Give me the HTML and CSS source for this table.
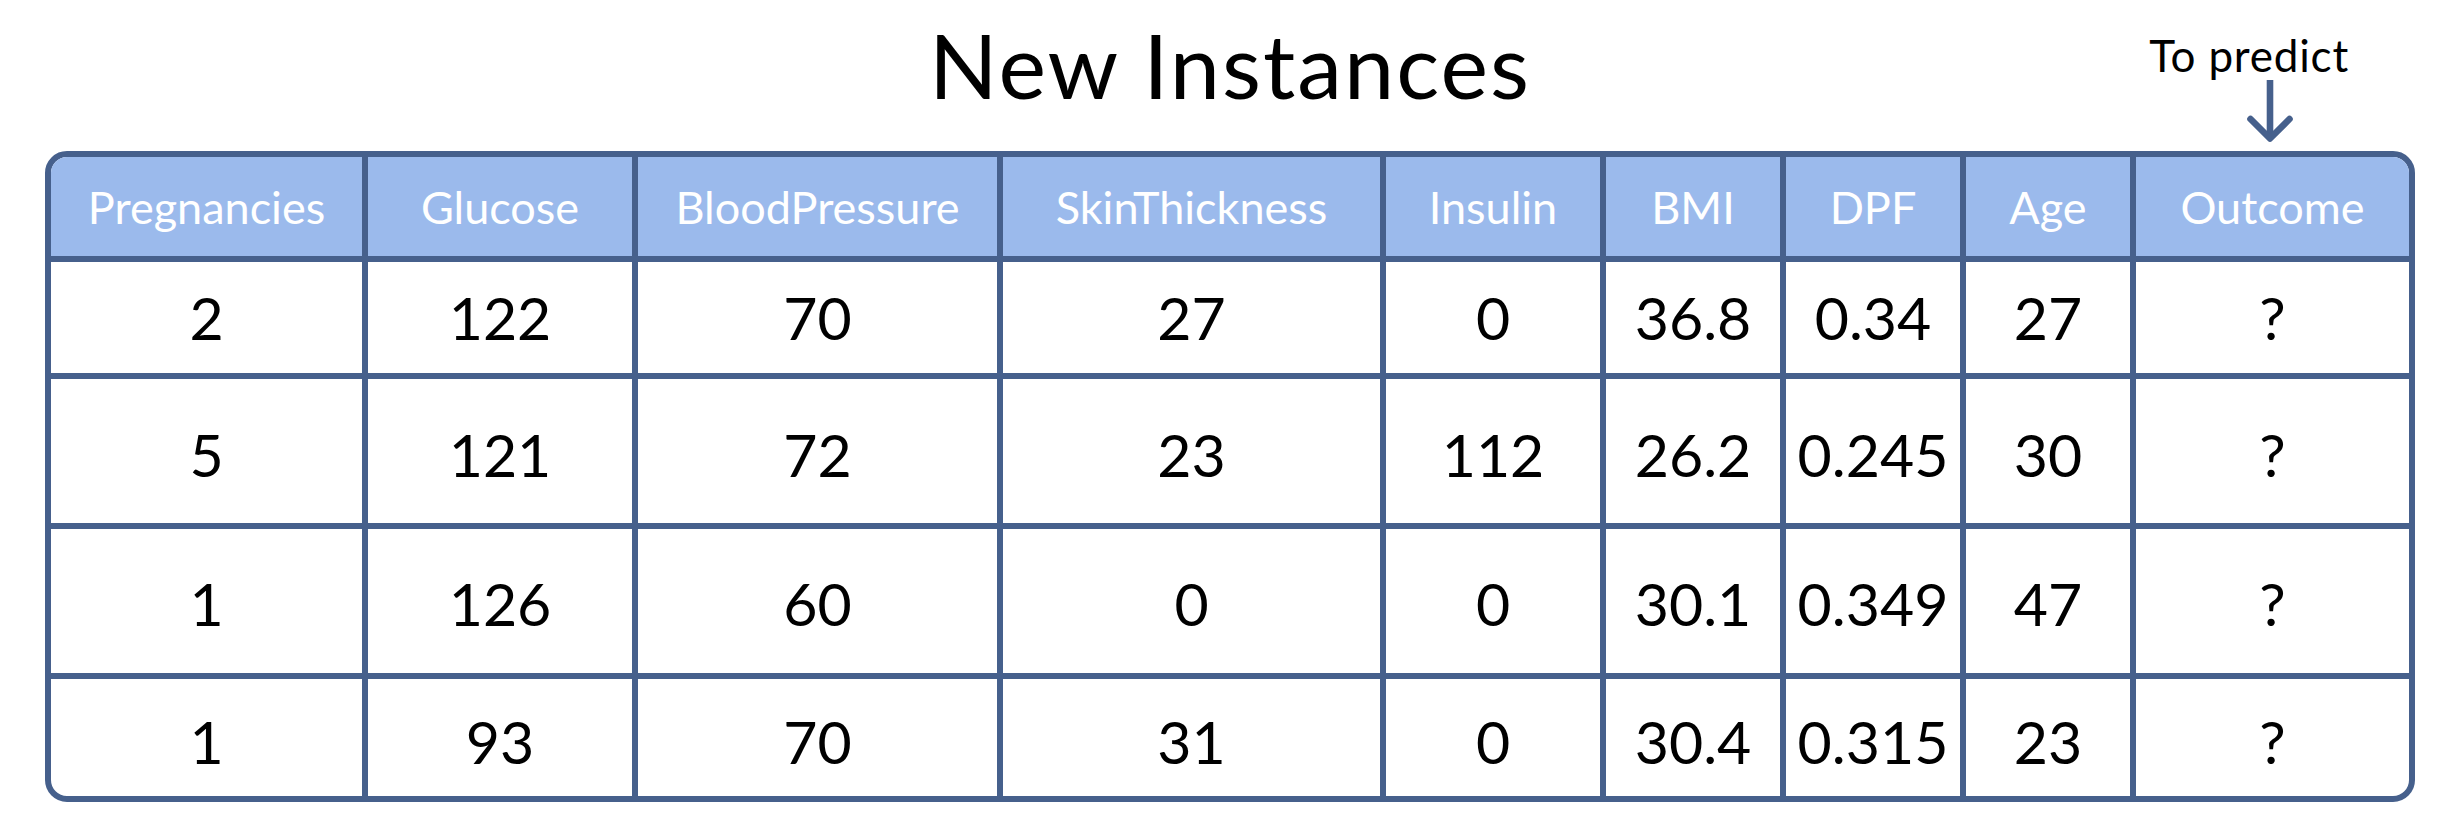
FILE: index.html
```html
<!DOCTYPE html>
<html lang="en">
<head>
<meta charset="utf-8">
<title>New Instances</title>
<link rel="stylesheet" href="styles.css">
</head>
<body>
<div class="figure">
  <div class="top">
    <h1 class="title">New Instances</h1>
    <div class="note">
      <span class="note-text">To predict</span>
      <svg class="arrow" width="50" height="74" viewBox="0 0 50 74" aria-hidden="true">
        <path d="M25 3 V60" fill="none" stroke="#46608c" stroke-width="6.6"/>
        <path d="M5.5 42 L25 61.5 L44.5 42" fill="none" stroke="#46608c" stroke-width="6.6" stroke-linecap="round" stroke-linejoin="round"/>
      </svg>
    </div>
  </div>
  <div class="table">
    <div class="row">
      <div class="cell head">Pregnancies</div>
      <div class="cell head">Glucose</div>
      <div class="cell head">BloodPressure</div>
      <div class="cell head">SkinThickness</div>
      <div class="cell head">Insulin</div>
      <div class="cell head">BMI</div>
      <div class="cell head">DPF</div>
      <div class="cell head">Age</div>
      <div class="cell head">Outcome</div>
    </div>
    <div class="row r1">
      <div class="cell val">2</div>
      <div class="cell val">122</div>
      <div class="cell val">70</div>
      <div class="cell val">27</div>
      <div class="cell val">0</div>
      <div class="cell val">36.8</div>
      <div class="cell val">0.34</div>
      <div class="cell val">27</div>
      <div class="cell val">?</div>
    </div>
    <div class="row r2">
      <div class="cell val">5</div>
      <div class="cell val">121</div>
      <div class="cell val">72</div>
      <div class="cell val">23</div>
      <div class="cell val">112</div>
      <div class="cell val">26.2</div>
      <div class="cell val">0.245</div>
      <div class="cell val">30</div>
      <div class="cell val">?</div>
    </div>
    <div class="row r3">
      <div class="cell val">1</div>
      <div class="cell val">126</div>
      <div class="cell val">60</div>
      <div class="cell val">0</div>
      <div class="cell val">0</div>
      <div class="cell val">30.1</div>
      <div class="cell val">0.349</div>
      <div class="cell val">47</div>
      <div class="cell val">?</div>
    </div>
    <div class="row r4 last">
      <div class="cell val">1</div>
      <div class="cell val">93</div>
      <div class="cell val">70</div>
      <div class="cell val">31</div>
      <div class="cell val">0</div>
      <div class="cell val">30.4</div>
      <div class="cell val">0.315</div>
      <div class="cell val">23</div>
      <div class="cell val">?</div>
    </div>
  </div>
</div>
</body>
</html>
```

FILE: styles.css
```css
html, body {
  margin: 0;
  padding: 0;
  background: #ffffff;
}

body {
  font-family: Lato, "Open Sans", "DejaVu Sans", sans-serif;
  color: #000000;
}

.figure {
  margin-left: 45px;
  width: 2370px;
}

.top {
  display: grid;
  grid-template-columns: 1fr auto 1fr;
  height: 151px;
}

.title {
  grid-column: 2;
  margin: 0;
  padding-top: 19px;
  font-size: 90px;
  line-height: 90px;
  font-weight: 400;
  letter-spacing: 2px;
  white-space: nowrap;
}

.note {
  grid-column: 3;
  justify-self: end;
  margin-right: 66px;
  padding-top: 33px;
  display: flex;
  flex-direction: column;
  align-items: flex-end;
}

.note-text {
  font-size: 44px;
  line-height: 44px;
  letter-spacing: 0.8px;
  white-space: nowrap;
}

.arrow {
  display: block;
  margin-right: 54px;
}

.table {
  display: grid;
  grid-template-columns: 317px 270px 365px 383px 220px 180px 180px 170px 273px;
  grid-template-rows: 105px 117px 150px 150px 117px;
  border: 6px solid #46608c;
  border-radius: 22px;
  overflow: hidden;
  background: #ffffff;
}

.row {
  display: contents;
}

.cell {
  box-sizing: border-box;
  display: flex;
  align-items: center;
  justify-content: center;
  border-right: 6px solid #46608c;
  border-bottom: 6px solid #46608c;
  white-space: nowrap;
}

.cell:last-child {
  border-right: none;
}

.last > .cell {
  border-bottom: none;
}

.head {
  background: #9bbaec;
  color: #ffffff;
  font-size: 45px;
}

.val {
  font-size: 59px;
  color: #000000;
}

.r2 > .cell {
  padding-top: 6px;
}

.r3 > .cell {
  padding-top: 5px;
}

.r4 > .cell {
  padding-top: 8px;
}
```
